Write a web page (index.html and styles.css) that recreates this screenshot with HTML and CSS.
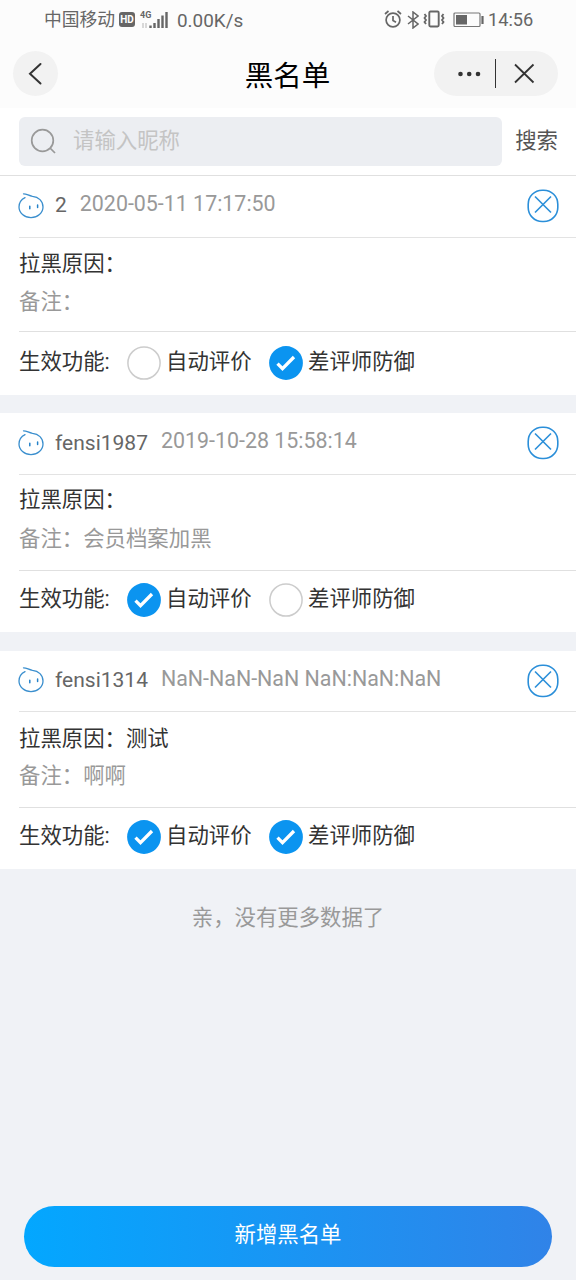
FILE: index.html
```html
<!DOCTYPE html>
<html lang="zh-CN">
<head>
<meta charset="utf-8">
<title>黑名单</title>
<link rel="stylesheet" href="styles.css">
</head>
<body>
<svg class="sprite" width="0" height="0">
  <symbol id="face" viewBox="0 0 26 26"><path d="M5.500 .8C9 .8 10.500 2.800 14.500 3.300C20.500 3.900 25 8 25 14C25 20 19.600 24.700 13 24.700C6.400 24.700 1 20 1 14C1 10 3.200 6.500 7 4.600" fill="none" stroke="#3b8fce" stroke-width="1.3" stroke-linecap="round"/><path d="M11.800 13.200v2.600M19.600 12v2.600" stroke="#2582ca" stroke-width="1.500" stroke-linecap="round"/></symbol>
  <symbol id="remove" viewBox="0 0 32 34"><rect x="1.200" y="1.200" width="29.600" height="31.300" rx="14" fill="none" stroke="#2b8fd9" stroke-width="1.600"/><path d="M8 7.500l16 16M24 7.500l-16 16" stroke="#2b8fd9" stroke-width="1.600"/></symbol>
  <symbol id="on" viewBox="0 0 34 34"><circle cx="17" cy="17" r="16.900" fill="#0b94f0"/><path d="M8.500 17.700l5 5L25 11" fill="none" stroke="#fff" stroke-width="3.300"/></symbol>
  <symbol id="off" viewBox="0 0 34 34"><circle cx="17" cy="17" r="16.100" fill="#fff" stroke="#ccc" stroke-width="1.500"/></symbol>
</svg>
<div class="page">
  <header class="top">
    <div class="status">
      <span class="carrier">中国移动</span>
      <span class="hd">HD</span>
      <span class="signal"><span class="gen">4G</span>
        <svg width="28" height="18" viewBox="0 0 28 18"><path d="M3 12v5M6 12v5" stroke="#ccc" stroke-width="1.500"/><path d="M10.500 14.500v2.500M14.500 12v5M18.500 8v9M22.500 4.500v12.500M26.500 1v16" stroke="#666" stroke-width="2.400"/></svg>
      </span>
      <span class="speed">0.00K/s</span>
      <svg class="alarm" width="18" height="18" viewBox="0 0 18 18" fill="none" stroke="#666" stroke-width="1.700"><circle cx="9" cy="10" r="6.900"/><path d="M9 6v4.500l3 1.700M1 4l3.500-3M17 4l-3.500-3"/></svg>
      <svg class="bt" width="12" height="18" viewBox="0 0 12 18" fill="none" stroke="#666" stroke-width="1.500"><path d="M1 5l10 8-5 4V1l5 4-10 8"/></svg>
      <svg class="vibrate" width="22" height="18" viewBox="0 0 22 18" fill="none" stroke="#666" stroke-width="1.900"><rect x="6.300" y="1.500" width="9.400" height="15" rx="1.200"/><path d="M1.500 4l1.500 2-1.500 2 1.500 2-1.500 2 1.500 2M20.500 4l-1.500 2 1.500 2-1.500 2 1.500 2-1.500 2" stroke-width="1.800"/></svg>
      <svg class="battery" width="32" height="16" viewBox="0 0 32 16"><rect x="1" y="1" width="26" height="13.500" rx="1" fill="none" stroke="#777" stroke-width="1.200"/><path d="M3 3h11v9.500H3z" fill="#666"/><path d="M29.500 4v8" stroke="#666" stroke-width="2.200"/></svg>
      <span class="clock">14:56</span>
    </div>
    <nav class="nav">
      <span class="back"><svg width="45" height="45" viewBox="0 0 45 45"><path d="M27.500 13L17 22.800L27.500 32.500" fill="none" stroke="#333" stroke-width="2" stroke-linecap="round"/></svg></span>
      <h1 class="title">黑名单</h1>
      <span class="capsule"><svg width="124" height="45" viewBox="0 0 124 45"><g fill="#333"><circle cx="26.500" cy="23" r="2.300"/><circle cx="35.200" cy="23" r="2.300"/><circle cx="44" cy="23" r="2.300"/></g><path d="M61.500 8v29" stroke="#333" stroke-width="1"/><path d="M81 13.500l18.500 18M99.500 13.500l-18.500 18" stroke="#333" stroke-width="1.800"/></svg></span>
    </nav>
  </header>
  <div class="search">
    <div class="field"><svg width="28" height="28" viewBox="0 0 28 28" fill="none" stroke="#999" stroke-width="1.700"><circle cx="12.500" cy="12.500" r="10.800"/><path d="M20 20l5 5"/></svg><span>请输入昵称</span></div>
    <span class="go">搜索</span>
  </div>
  <main class="list">
    <section class="card first">
      <div class="head"><svg class="face"><use href="#face"/></svg><span class="name">2</span><span class="date">2020-05-11 17:17:50</span><svg class="remove"><use href="#remove"/></svg></div>
      <div class="body"><p class="reason">拉黑原因：</p><p class="note">备注：</p></div>
      <div class="foot"><span class="label">生效功能:</span><svg class="check"><use href="#off"/></svg><span class="auto">自动评价</span><svg class="check"><use href="#on"/></svg><span>差评师防御</span></div>
    </section>
    <section class="card second">
      <div class="head"><svg class="face"><use href="#face"/></svg><span class="name">fensi1987</span><span class="date">2019-10-28 15:58:14</span><svg class="remove"><use href="#remove"/></svg></div>
      <div class="body"><p class="reason">拉黑原因：</p><p class="note">备注：会员档案加黑</p></div>
      <div class="foot"><span class="label">生效功能:</span><svg class="check"><use href="#on"/></svg><span class="auto">自动评价</span><svg class="check"><use href="#off"/></svg><span>差评师防御</span></div>
    </section>
    <section class="card third">
      <div class="head"><svg class="face"><use href="#face"/></svg><span class="name">fensi1314</span><span class="date">NaN-NaN-NaN NaN:NaN:NaN</span><svg class="remove"><use href="#remove"/></svg></div>
      <div class="body"><p class="reason">拉黑原因：测试</p><p class="note">备注：啊啊</p></div>
      <div class="foot"><span class="label">生效功能:</span><svg class="check"><use href="#on"/></svg><span class="auto">自动评价</span><svg class="check"><use href="#on"/></svg><span>差评师防御</span></div>
    </section>
  </main>
  <p class="end">亲，没有更多数据了</p>
  <div class="bottom"><div class="add">新增黑名单</div></div>
</div>
</body>
</html>
```
FILE: styles.css
```css
* { box-sizing: border-box; }
body { margin: 0; font-family: Roboto, "Noto Sans CJK SC", sans-serif; font-weight: 400; font-size: 21.4px; line-height: 32px; color: #333; background: #f0f2f6; }
p, h1 { margin: 0; }
svg { display: block; flex: none; }
.sprite { position: absolute; }
.page { width: 576px; height: 1280px; display: flex; flex-direction: column; overflow: hidden; }
.top { height: 108px; background: #fcfcfc; }
.status { height: 40px; padding-left: 44px; display: flex; align-items: center; font-size: 18px; line-height: 41px; color: #666; white-space: nowrap; }
.carrier { width: 75px; font-size: 17.8px; line-height: 42px; }
.hd { width: 16px; height: 15px; margin-top: -1px; border-radius: 3px; background: #666; color: #fff; font-size: 10px; font-weight: 700; line-height: 15px; text-align: center; }
.signal { position: relative; width: 28px; margin: -1px 0 0 5px; }
.gen { position: absolute; left: 0; top: -1px; font-size: 9px; line-height: 11px; font-weight: 700; }
.speed { width: 76px; margin-left: 9px; font-size: 18.9px; }
.alarm { margin: -3px 0 0 131px; }
.bt { margin: -1px 0 0 5px; }
.vibrate { margin: -2px 0 0 4px; }
.battery { margin-left: 8px; }
.clock { margin-left: 3px; font-size: 18.2px; line-height: 40px; }
.nav { height: 68px; padding: 11px 18px 0 13px; display: flex; justify-content: space-between; }
.back, .capsule { height: 45px; border-radius: 23px; background: #f2f2f2; }
.title { margin-left: 83px; font-size: 28.500px; line-height: 51px; height: 45px; font-weight: 400; color: #000; }
.search { height: 68px; padding: 9px 18px 0 19px; display: flex; justify-content: space-between; background: #fff; border-bottom: 1px solid #e0e0e0; }
.field { width: 483px; height: 49px; padding-left: 11px; display: flex; align-items: center; gap: 15px; border-radius: 6px; background: #eceef2; color: #c4c4c4; }
.field span { line-height: 47px; height: 49px; }
.go { line-height: 47px; color: #555; }
.list { display: flex; flex-direction: column; gap: 18px; }
.card { display: grid; background: #fff; padding-left: 19px; }
.first { grid-template-rows: 62px 94px 63px; }
.second { grid-template-rows: 62px 96px 61px; }
.third { grid-template-rows: 61px 96px 61px; margin-top: 1px; }
.head { display: flex; align-items: center; padding: 0 17px 0 0; border-bottom: 1px solid #e3e3e3; }
.face { width: 26px; height: 26px; margin: -2px 0 0 -1px; }
.name { margin: -4px 13px 0 11px; color: #666; font-size: 21px; }
.second .name, .third .name { margin-top: -2px; }
.date { margin-top: -5px; color: #999; }
.remove { width: 32px; height: 34px; margin: -1px 0 0 auto; }
.third .remove { margin-top: 0; }
.body { padding-top: 10px; border-bottom: 1px solid #e0e0e0; }
.note { margin-top: 6px; color: #999; }
.second .body { padding-top: 9px; }
.second .note { margin-top: 7px; }
.third .body { padding-top: 11px; }
.third .note { margin-top: 5px; }
.foot { display: flex; align-items: center; height: 60px; white-space: nowrap; }
.first .foot { height: 62px; }
.second .foot, .third .foot { height: 58px; }
.foot span { margin-top: -2px; }
.label { width: 108px; }
.check { width: 34px; height: 34px; margin-right: 5px; }
.auto { width: 103px; }
.end { margin-top: 33px; text-align: center; color: #999; }
.bottom { margin-top: auto; padding: 0 24px 13px; }
.add { height: 61px; border-radius: 31px; background: linear-gradient(90deg, #03a7ff, #3083e8); color: #fff; text-align: center; line-height: 57px; }
```
